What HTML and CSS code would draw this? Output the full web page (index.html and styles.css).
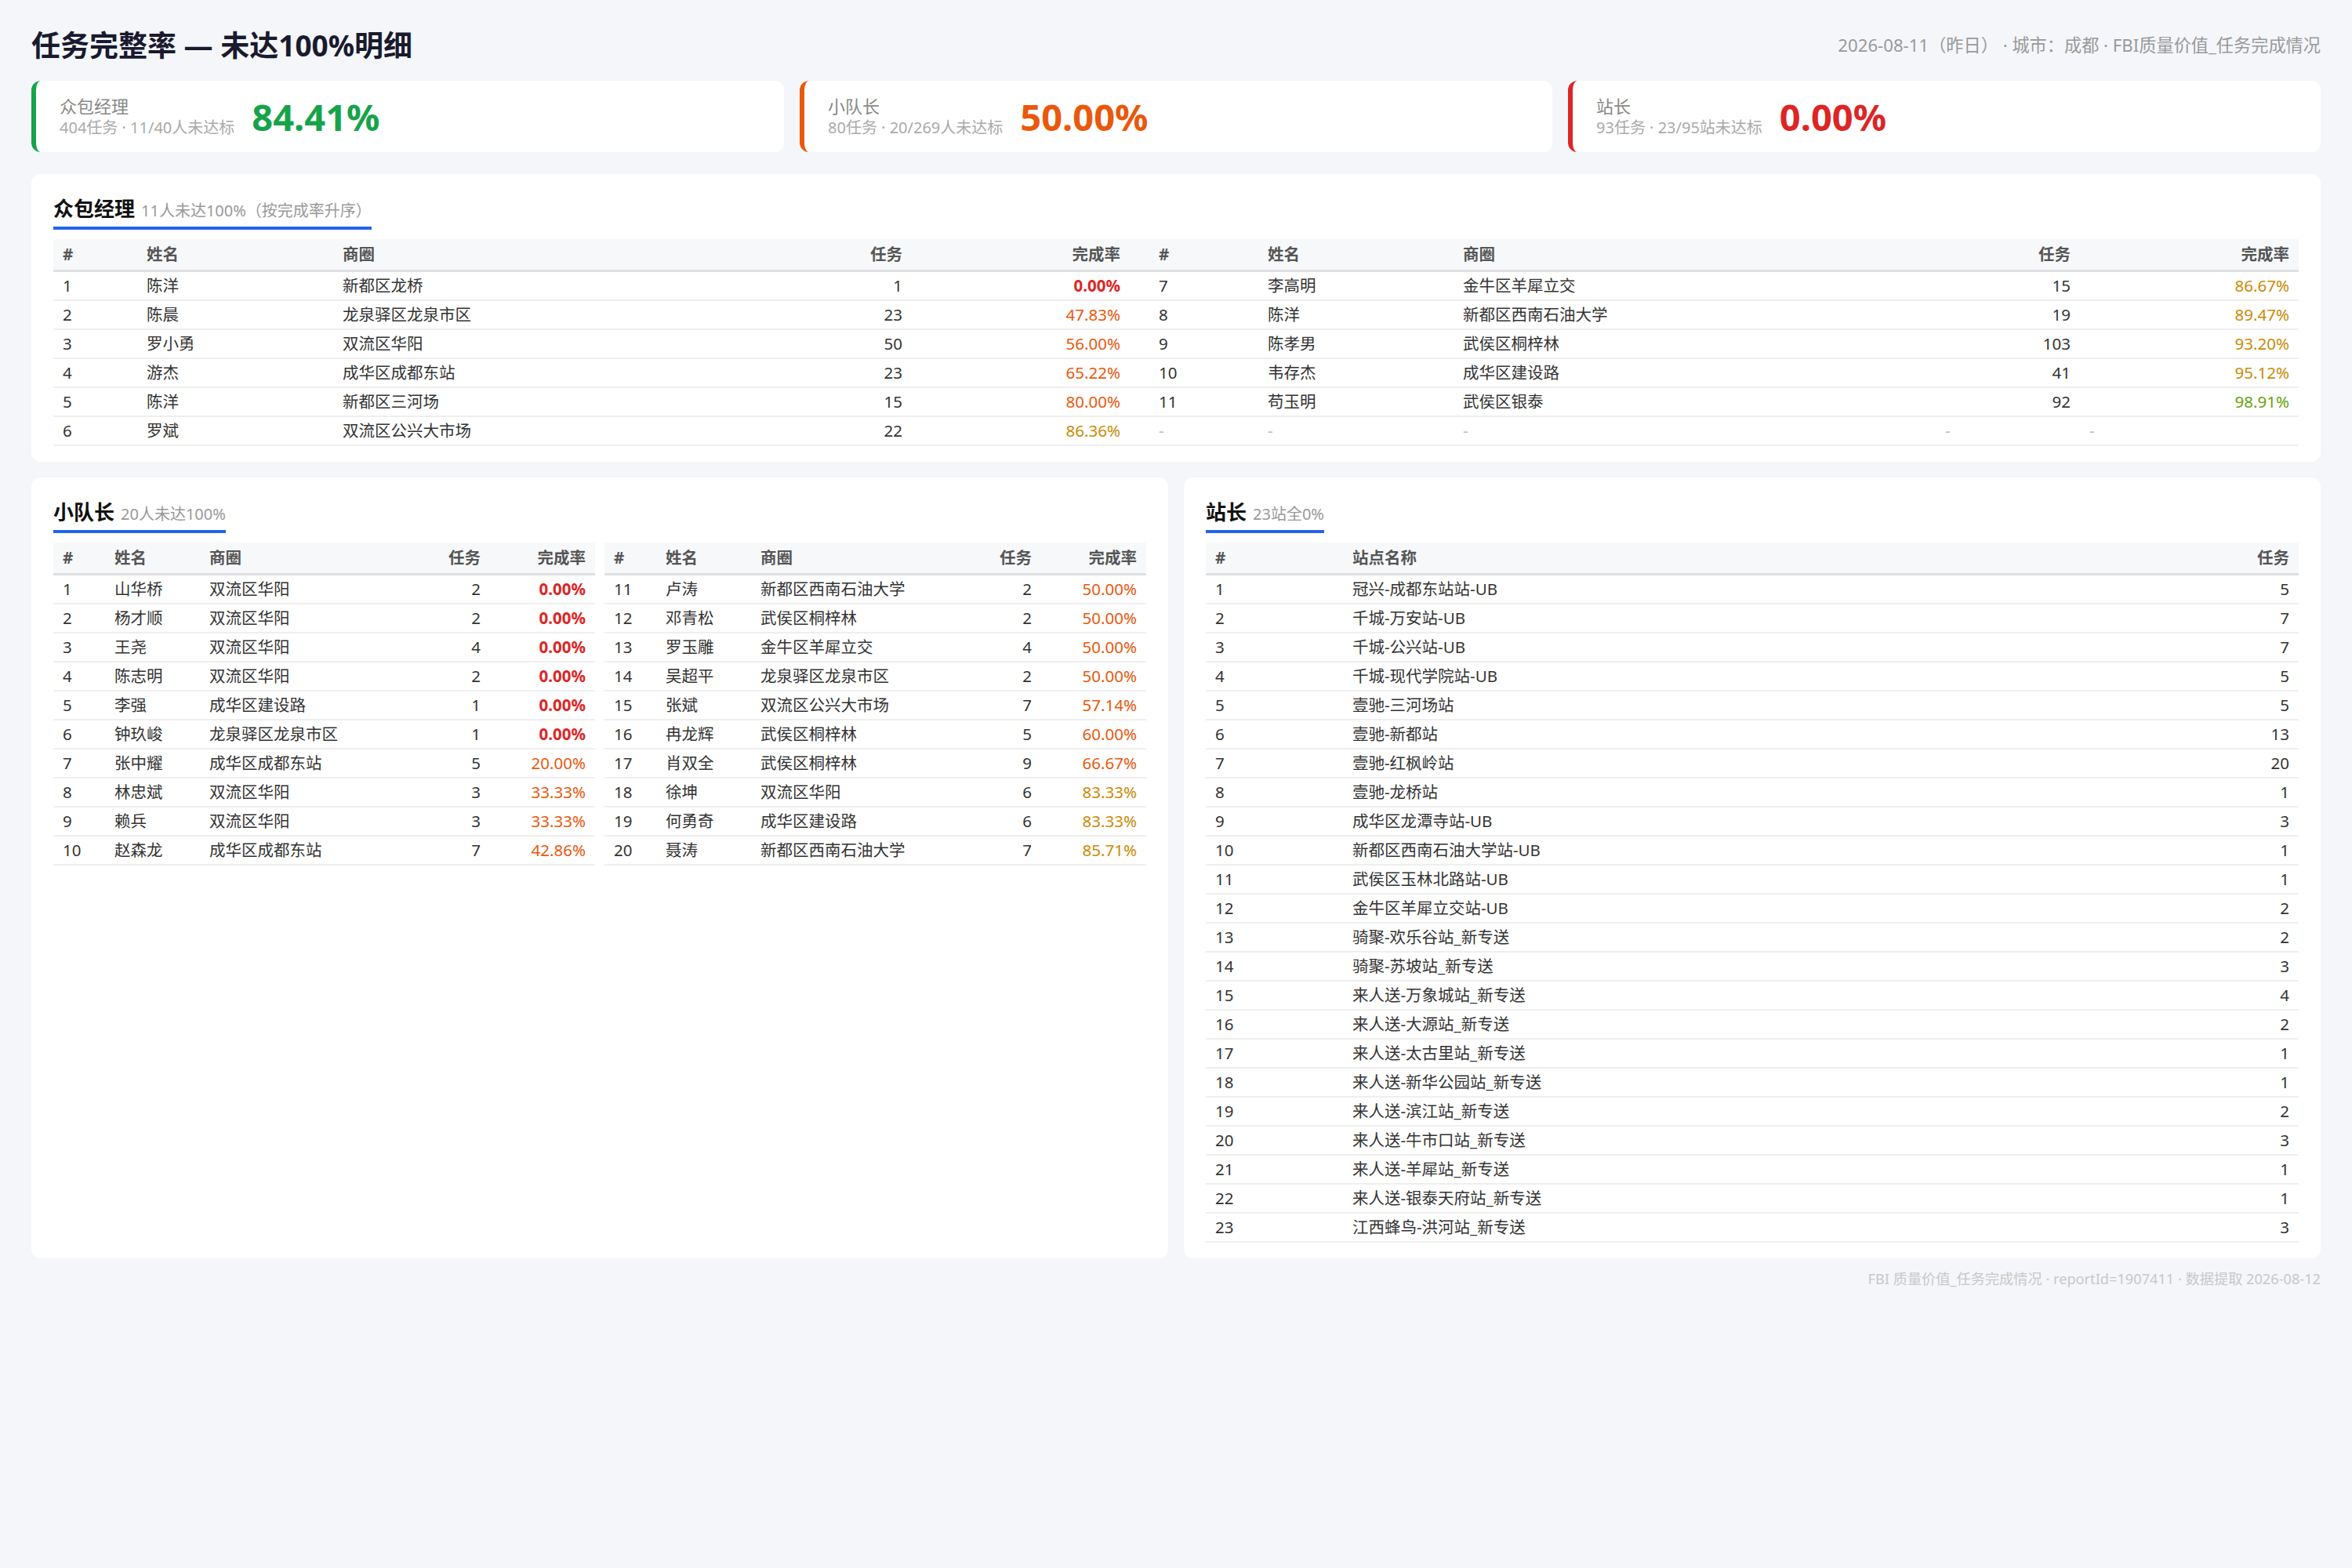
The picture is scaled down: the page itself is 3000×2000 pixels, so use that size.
FILE: index.html
```html
<!DOCTYPE html>
<html lang="zh-CN">
<head>
<meta charset="utf-8">
<title>任务完整率 — 未达100%明细</title>
<link rel="stylesheet" href="styles.css">
</head>
<body>
<div class="page">
  <header class="topbar">
    <h1 class="title">任务完整率 — 未达100%明细</h1>
    <div class="meta">2026-08-11（昨日） · 城市：成都 · FBI质量价值_任务完成情况</div>
  </header>

  <section class="cards">
    <div class="card card-green">
      <div class="card-text">
        <div class="card-label">众包经理</div>
        <div class="card-sub">404任务 · 11/40人未达标</div>
      </div>
      <div class="card-value green">84.41%</div>
    </div>
    <div class="card card-orange">
      <div class="card-text">
        <div class="card-label">小队长</div>
        <div class="card-sub">80任务 · 20/269人未达标</div>
      </div>
      <div class="card-value orange">50.00%</div>
    </div>
    <div class="card card-red">
      <div class="card-text">
        <div class="card-label">站长</div>
        <div class="card-sub">93任务 · 23/95站未达标</div>
      </div>
      <div class="card-value red">0.00%</div>
    </div>
  </section>

  <section class="panel">
    <h2 class="panel-title">众包经理<span class="panel-sub">11人未达100%（按完成率升序）</span></h2>
    <table class="tbl tbl-wide">
      <colgroup><col><col><col><col><col><col><col><col><col><col></colgroup>
      <thead>
        <tr><th>#</th><th>姓名</th><th>商圈</th><th class="num">任务</th><th class="num">完成率</th><th class="split">#</th><th>姓名</th><th>商圈</th><th class="num">任务</th><th class="num">完成率</th></tr>
      </thead>
      <tbody>
        <tr><td>1</td><td>陈洋</td><td>新都区龙桥</td><td class="num">1</td><td class="num r-red">0.00%</td><td class="split">7</td><td>李高明</td><td>金牛区羊犀立交</td><td class="num">15</td><td class="num r-amber">86.67%</td></tr>
        <tr><td>2</td><td>陈晨</td><td>龙泉驿区龙泉市区</td><td class="num">23</td><td class="num r-orange">47.83%</td><td class="split">8</td><td>陈洋</td><td>新都区西南石油大学</td><td class="num">19</td><td class="num r-amber">89.47%</td></tr>
        <tr><td>3</td><td>罗小勇</td><td>双流区华阳</td><td class="num">50</td><td class="num r-orange">56.00%</td><td class="split">9</td><td>陈孝男</td><td>武侯区桐梓林</td><td class="num">103</td><td class="num r-amber">93.20%</td></tr>
        <tr><td>4</td><td>游杰</td><td>成华区成都东站</td><td class="num">23</td><td class="num r-orange">65.22%</td><td class="split">10</td><td>韦存杰</td><td>成华区建设路</td><td class="num">41</td><td class="num r-amber">95.12%</td></tr>
        <tr><td>5</td><td>陈洋</td><td>新都区三河场</td><td class="num">15</td><td class="num r-orange">80.00%</td><td class="split">11</td><td>苟玉明</td><td>武侯区银泰</td><td class="num">92</td><td class="num r-green">98.91%</td></tr>
        <tr><td>6</td><td>罗斌</td><td>双流区公兴大市场</td><td class="num">22</td><td class="num r-amber">86.36%</td><td class="split empty">-</td><td class="empty">-</td><td class="empty">-</td><td class="empty">-</td><td class="empty">-</td></tr>
      </tbody>
    </table>
  </section>

  <section class="bottom">
    <div class="panel">
      <h2 class="panel-title">小队长<span class="panel-sub">20人未达100%</span></h2>
      <div class="pair">
        <table class="tbl tbl-half">
          <colgroup><col><col><col><col><col></colgroup>
          <thead><tr><th>#</th><th>姓名</th><th>商圈</th><th class="num">任务</th><th class="num">完成率</th></tr></thead>
          <tbody>
            <tr><td>1</td><td>山华桥</td><td>双流区华阳</td><td class="num">2</td><td class="num r-red">0.00%</td></tr>
            <tr><td>2</td><td>杨才顺</td><td>双流区华阳</td><td class="num">2</td><td class="num r-red">0.00%</td></tr>
            <tr><td>3</td><td>王尧</td><td>双流区华阳</td><td class="num">4</td><td class="num r-red">0.00%</td></tr>
            <tr><td>4</td><td>陈志明</td><td>双流区华阳</td><td class="num">2</td><td class="num r-red">0.00%</td></tr>
            <tr><td>5</td><td>李强</td><td>成华区建设路</td><td class="num">1</td><td class="num r-red">0.00%</td></tr>
            <tr><td>6</td><td>钟玖峻</td><td>龙泉驿区龙泉市区</td><td class="num">1</td><td class="num r-red">0.00%</td></tr>
            <tr><td>7</td><td>张中耀</td><td>成华区成都东站</td><td class="num">5</td><td class="num r-orange">20.00%</td></tr>
            <tr><td>8</td><td>林忠斌</td><td>双流区华阳</td><td class="num">3</td><td class="num r-orange">33.33%</td></tr>
            <tr><td>9</td><td>赖兵</td><td>双流区华阳</td><td class="num">3</td><td class="num r-orange">33.33%</td></tr>
            <tr><td>10</td><td>赵森龙</td><td>成华区成都东站</td><td class="num">7</td><td class="num r-orange">42.86%</td></tr>
          </tbody>
        </table>
        <table class="tbl tbl-half">
          <colgroup><col><col><col><col><col></colgroup>
          <thead><tr><th>#</th><th>姓名</th><th>商圈</th><th class="num">任务</th><th class="num">完成率</th></tr></thead>
          <tbody>
            <tr><td>11</td><td>卢涛</td><td>新都区西南石油大学</td><td class="num">2</td><td class="num r-orange">50.00%</td></tr>
            <tr><td>12</td><td>邓青松</td><td>武侯区桐梓林</td><td class="num">2</td><td class="num r-orange">50.00%</td></tr>
            <tr><td>13</td><td>罗玉雕</td><td>金牛区羊犀立交</td><td class="num">4</td><td class="num r-orange">50.00%</td></tr>
            <tr><td>14</td><td>吴超平</td><td>龙泉驿区龙泉市区</td><td class="num">2</td><td class="num r-orange">50.00%</td></tr>
            <tr><td>15</td><td>张斌</td><td>双流区公兴大市场</td><td class="num">7</td><td class="num r-orange">57.14%</td></tr>
            <tr><td>16</td><td>冉龙辉</td><td>武侯区桐梓林</td><td class="num">5</td><td class="num r-orange">60.00%</td></tr>
            <tr><td>17</td><td>肖双全</td><td>武侯区桐梓林</td><td class="num">9</td><td class="num r-orange">66.67%</td></tr>
            <tr><td>18</td><td>徐坤</td><td>双流区华阳</td><td class="num">6</td><td class="num r-amber">83.33%</td></tr>
            <tr><td>19</td><td>何勇奇</td><td>成华区建设路</td><td class="num">6</td><td class="num r-amber">83.33%</td></tr>
            <tr><td>20</td><td>聂涛</td><td>新都区西南石油大学</td><td class="num">7</td><td class="num r-amber">85.71%</td></tr>
          </tbody>
        </table>
      </div>
    </div>

    <div class="panel">
      <h2 class="panel-title">站长<span class="panel-sub">23站全0%</span></h2>
      <table class="tbl tbl-station">
        <colgroup><col><col><col></colgroup>
        <thead><tr><th>#</th><th>站点名称</th><th class="num">任务</th></tr></thead>
        <tbody>
          <tr><td>1</td><td>冠兴-成都东站站-UB</td><td class="num">5</td></tr>
          <tr><td>2</td><td>千城-万安站-UB</td><td class="num">7</td></tr>
          <tr><td>3</td><td>千城-公兴站-UB</td><td class="num">7</td></tr>
          <tr><td>4</td><td>千城-现代学院站-UB</td><td class="num">5</td></tr>
          <tr><td>5</td><td>壹驰-三河场站</td><td class="num">5</td></tr>
          <tr><td>6</td><td>壹驰-新都站</td><td class="num">13</td></tr>
          <tr><td>7</td><td>壹驰-红枫岭站</td><td class="num">20</td></tr>
          <tr><td>8</td><td>壹驰-龙桥站</td><td class="num">1</td></tr>
          <tr><td>9</td><td>成华区龙潭寺站-UB</td><td class="num">3</td></tr>
          <tr><td>10</td><td>新都区西南石油大学站-UB</td><td class="num">1</td></tr>
          <tr><td>11</td><td>武侯区玉林北路站-UB</td><td class="num">1</td></tr>
          <tr><td>12</td><td>金牛区羊犀立交站-UB</td><td class="num">2</td></tr>
          <tr><td>13</td><td>骑聚-欢乐谷站_新专送</td><td class="num">2</td></tr>
          <tr><td>14</td><td>骑聚-苏坡站_新专送</td><td class="num">3</td></tr>
          <tr><td>15</td><td>来人送-万象城站_新专送</td><td class="num">4</td></tr>
          <tr><td>16</td><td>来人送-大源站_新专送</td><td class="num">2</td></tr>
          <tr><td>17</td><td>来人送-太古里站_新专送</td><td class="num">1</td></tr>
          <tr><td>18</td><td>来人送-新华公园站_新专送</td><td class="num">1</td></tr>
          <tr><td>19</td><td>来人送-滨江站_新专送</td><td class="num">2</td></tr>
          <tr><td>20</td><td>来人送-牛市口站_新专送</td><td class="num">3</td></tr>
          <tr><td>21</td><td>来人送-羊犀站_新专送</td><td class="num">1</td></tr>
          <tr><td>22</td><td>来人送-银泰天府站_新专送</td><td class="num">1</td></tr>
          <tr><td>23</td><td>江西蜂鸟-洪河站_新专送</td><td class="num">3</td></tr>
        </tbody>
      </table>
    </div>
  </section>

  <footer class="footer">FBI 质量价值_任务完成情况 · reportId=1907411 · 数据提取 2026-08-12</footer>
</div>
</body>
</html>
```

FILE: styles.css
```css
* { box-sizing: border-box; }

html, body {
  margin: 0;
  padding: 0;
  background: #f4f6f9;
}

body {
  font-family: "Noto Sans", "Noto Sans CJK SC", sans-serif;
  color: #333;
}

.page {
  padding: 34px 40px 40px;
}

.topbar {
  display: flex;
  justify-content: space-between;
  align-items: center;
  height: 47px;
  margin-bottom: 22px;
}

.title {
  margin: 0;
  font-size: 37px;
  line-height: 47px;
  font-weight: 700;
  color: #1a1a2e;
}

.meta {
  font-size: 22.2px;
  line-height: 30px;
  color: #999;
}

.cards {
  display: grid;
  grid-template-columns: repeat(3, 1fr);
  gap: 20px;
  margin-bottom: 28px;
}

.card {
  display: flex;
  align-items: center;
  gap: 22px;
  background: #fff;
  border-radius: 12px;
  border-left: 6px solid #16a34a;
  padding: 18px 30px;
  height: 91px;
}

.card-green { border-left-color: #16a34a; }
.card-orange { border-left-color: #ea580c; }
.card-red { border-left-color: #dc2626; }

.card-label {
  font-size: 22px;
  line-height: 29px;
  color: #888;
}

.card-sub {
  font-size: 20px;
  line-height: 26px;
  color: #aaa;
}

.card-value {
  font-size: 47px;
  line-height: 54px;
  font-weight: 700;
}

.green { color: #16a34a; }
.orange { color: #ea580c; }
.red { color: #dc2626; }

.panel {
  background: #fff;
  border-radius: 12px;
  padding: 26px 28px 20px;
}

.panel-title {
  display: flex;
  align-items: baseline;
  width: fit-content;
  height: 45px;
  margin: 0 0 12px;
  font-size: 26px;
  line-height: 36px;
  font-weight: 700;
  color: #111;
  padding-bottom: 5px;
  border-bottom: 4px solid #2563eb;
}

.panel-sub {
  font-size: 20px;
  line-height: 26px;
  font-weight: 400;
  color: #999;
  margin-left: 8px;
}

.tbl {
  width: 100%;
  border-collapse: collapse;
  table-layout: fixed;
  font-size: 20.5px;
}

.tbl th {
  background: #f7f8fa;
  color: #555;
  font-weight: 700;
  text-align: left;
  height: 39px;
  line-height: 39px;
  padding: 0 12px;
  border-bottom: 3px solid #e0e0e2;
  white-space: nowrap;
}

.tbl td {
  height: 35px;
  line-height: 35px;
  padding: 0 12px;
  border-bottom: 2px solid #efefef;
  white-space: nowrap;
  overflow: hidden;
}

.tbl .num { text-align: right; }
.tbl .split { padding-left: 37px; }
.tbl td.empty { color: #bbb; }

.r-red { color: #dc2626; font-weight: 700; }
.r-orange { color: #ea580c; }
.r-amber { color: #ca8a04; }
.r-green { color: #65a30d; }

/* 众包经理：双栏宽表 */
.tbl-wide col:nth-child(1) { width: 107px; }
.tbl-wide col:nth-child(2) { width: 250px; }
.tbl-wide col:nth-child(3) { width: 554px; }
.tbl-wide col:nth-child(4) { width: 184px; }
.tbl-wide col:nth-child(5) { width: 278px; }
.tbl-wide col:nth-child(6) { width: 164px; }
.tbl-wide col:nth-child(7) { width: 249px; }
.tbl-wide col:nth-child(8) { width: 615px; }
.tbl-wide col:nth-child(9) { width: 184px; }
.tbl-wide col:nth-child(10) { width: 279px; }

.bottom {
  display: grid;
  grid-template-columns: 1fr 1fr;
  gap: 20px;
  margin-top: 20px;
}

.pair {
  display: grid;
  grid-template-columns: 1fr 1fr;
  gap: 12px;
}

.tbl-half col:nth-child(1) { width: 66px; }
.tbl-half col:nth-child(2) { width: 121px; }
.tbl-half col:nth-child(4) { width: 100px; }
.tbl-half col:nth-child(5) { width: 134px; }

.tbl-station col:nth-child(1) { width: 175px; }
.tbl-station col:nth-child(3) { width: 160px; }

.footer {
  margin-top: 12px;
  text-align: right;
  font-size: 18.2px;
  color: #c8c8c8;
}
```
